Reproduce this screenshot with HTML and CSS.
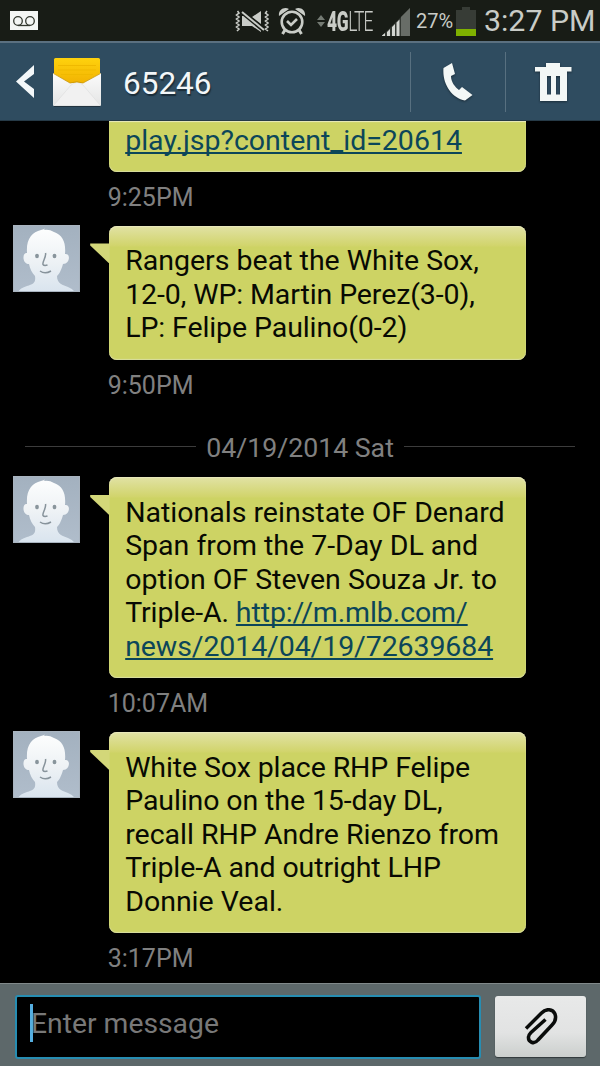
FILE: index.html
```html
<!DOCTYPE html>
<html lang="en">
<head>
<meta charset="utf-8">
<title>65246</title>
<link rel="stylesheet" href="styles.css">
</head>
<body>
<svg width="0" height="0" class="defs" aria-hidden="true">
  <defs>
    <linearGradient id="wall" x1="0" y1="0" x2="0" y2="1"><stop offset="0" stop-color="#a3b1bf"/><stop offset="1" stop-color="#b0bdcb"/></linearGradient>
    <linearGradient id="skin" x1="0" y1="0" x2="0" y2="1"><stop offset="0" stop-color="#fdfefe"/><stop offset=".5" stop-color="#eef2f5"/><stop offset="1" stop-color="#d9e4ee"/></linearGradient>
    <symbol id="person" viewBox="0 0 67 67">
      <rect width="67" height="67" fill="url(#wall)"/>
      <path d="M14 28C13 14 19 7 28 5Q31 4 32 3.500L31 5Q36 4 41 7C50 10 53 18 52 29C58 28 57 39 50 39C48 46 46 49 44 51C44 59 50 60 55 62Q60 64 62 67H5Q7 63 14 61C20 59 23 58 22 51C19 48 17 44 16 39C9 39 9 27 14 28Z" fill="url(#skin)"/>
      <ellipse cx="24" cy="31" rx="1.900" ry="2.300" fill="#89959c"/>
      <ellipse cx="41.500" cy="31" rx="1.900" ry="2.300" fill="#89959c"/>
      <path d="M32.500 28C33.500 32 29 37 30 39.500Q31 41 34.500 40M27 46Q32 49.500 38 46" fill="none" stroke="#87939b" stroke-width="1.500"/>
      <rect x=".5" y=".5" width="66" height="66" fill="none" stroke="#a9b4bf"/>
    </symbol>
  </defs>
</svg>

<div class="status">
  <svg class="voicemail" width="28" height="19" viewBox="0 0 28 19"><rect width="28" height="19" fill="#f4f6f4"/><g fill="none" stroke="#33382f" stroke-width="1.300"><circle cx="8" cy="10" r="4.300"/><circle cx="20" cy="10" r="4.300"/><path d="M8 14.500H20"/></g></svg>
  <svg class="mute" width="35" height="24" viewBox="0 0 35 24">
    <path d="M2.500 1L4 3L1.500 5L4 7L1.500 9L4 11L1.500 13L4 15L1.500 17L4 19L2 21M32 1L30.500 3L33 5L30.500 7L33 9L30.500 11L33 13L30.500 15L33 17L30.500 19L33 21" fill="none" stroke="#c9ccc7" stroke-width="1.600"/>
    <path d="M7 6H12L26 17V22L17 16H7ZM17 7L26 1V14Z" fill="#c9ccc7"/>
    <path d="M7 2L28 19.500" stroke="#181c16" stroke-width="4.500"/>
    <path d="M7 2L29 20" stroke="#c9ccc7" stroke-width="2"/>
  </svg>
  <svg class="alarm" width="28" height="28" viewBox="0 0 28 28">
    <g fill="none" stroke="#c9ccc7"><circle cx="14" cy="15" r="10.300" stroke-width="2.600"/><path d="M9 14L13 18L19 12" stroke-width="2.600"/><path d="M7 23L4.500 27M21 23L23.500 27" stroke-width="3"/></g>
    <path d="M1 9C0 3 6-1 11 2ZM27 9C28 3 22-1 17 2Z" fill="#c9ccc7"/>
  </svg>
  <svg class="updown" width="8" height="12" viewBox="0 0 8 12"><path d="M0 5L4 0L8 5ZM0 7L4 12L8 7Z" fill="#747a73"/></svg>
  <span class="net"><b>4G</b><span>LTE</span></span>
  <svg class="signal" width="28" height="28" viewBox="0 0 28 28"><path d="M0 28L28 0V28Z" fill="#343933"/><path d="M19 9L28 0V28H19Z" fill="#686d67"/><path d="M0 28V27.500L3 25V28ZM5 28V24L8 21V28ZM10 28V19L13 16V28ZM14.500 28V14.500L17.500 11.500V28Z" fill="#d3d6d1"/></svg>
  <span class="pct">27%</span>
  <svg class="battery" width="20" height="29" viewBox="0 0 20 29"><path d="M0 3H6V0H14V3H20V29H0Z" fill="#373c36"/><path d="M0 22H20V29H0Z" fill="#7fb000"/></svg>
  <span class="clock">3:27 PM</span>
</div>

<header class="bar">
  <svg class="back" width="18" height="33" viewBox="0 0 18 33"><path d="M18 0V9L8 16.500L18 24V33L0 16.500Z" fill="#f3f7f9"/></svg>
  <svg class="mail" width="50" height="50" viewBox="0 0 50 50">
    <defs><linearGradient id="gold" x1="0" y1="0" x2="0" y2="1"><stop offset="0" stop-color="#ffd20d"/><stop offset="1" stop-color="#efad00"/></linearGradient><linearGradient id="paper" x1="0" y1="0" x2="0" y2="1"><stop offset="0" stop-color="#fbfbfb"/><stop offset="1" stop-color="#e4e5e5"/></linearGradient></defs>
    <rect x="2" y="1" width="46" height="30" rx="1.500" fill="url(#gold)"/>
    <path d="M6 8.500H44M6 13H44M9 17.500H41" stroke="#f0b900" stroke-width="1"/>
    <path d="M1 16L18 26H31L49 16V48Q49 49 48 49H2Q1 49 1 48Z" fill="url(#paper)"/>
    <path d="M2 48L19 28Q25 23 31 28L48 48" fill="#f1f1f1" stroke="#dfe0e0" stroke-width=".7"/>
    <path d="M1.500 16.500L18 26Q25 23.500 31 26L48.500 16.500" fill="none" stroke="#c99709" stroke-width=".8"/>
    <path d="M2 49.500H48" stroke="#22333f"/>
  </svg>
  <h1>65246</h1>
  <div class="action">
    <svg width="32" height="40" viewBox="0 0 32 40"><path d="M1.500 6L10 1L13 12L9 14C9 20 13 25 17 28L20 25L30.500 33L23 38.500C10 36 0 22 1.500 6Z" fill="#f3f7f6"/></svg>
  </div>
  <div class="action">
    <svg width="38" height="40" viewBox="0 0 38 40"><path fill-rule="evenodd" d="M1 5H12V1H26V5H37.500V9.500H33V39H6V9.500H1ZM13 14V32.500H17V14ZM22 14V32.500H26V14Z" fill="#f3f7f6"/></svg>
  </div>
</header>

<main class="thread">
  <article class="msg first">
    <div class="bubble"><p><a>play.jsp?content_id=20614</a></p></div>
    <time>9:25PM</time>
  </article>
  <article class="msg">
    <svg class="avatar"><use href="#person"/></svg>
    <div class="bubble tail"><p>Rangers beat the White Sox,<br><span class="tight">12-0, WP: Martin Perez(3-0),<br>LP: Felipe Paulino(0-2)</span></p></div>
    <time>9:50PM</time>
  </article>
  <div class="date"><span>04/19/2014 Sat</span></div>
  <article class="msg">
    <svg class="avatar"><use href="#person"/></svg>
    <div class="bubble tail"><p>Nationals reinstate OF Denard<br>Span from the 7-Day DL and<br>option OF Steven Souza Jr. to<br><span class="tight">Triple-A. <a>http://m.mlb.com/<br>news/2014/04/19/72639684</a></span></p></div>
    <time>10:07AM</time>
  </article>
  <article class="msg">
    <svg class="avatar"><use href="#person"/></svg>
    <div class="bubble tail"><p><span class="tight">White Sox place RHP Felipe<br>Paulino on the 15-day DL,</span><br>recall RHP Andre Rienzo from<br><span class="tight">Triple-A and outright LHP</span><br>Donnie Veal.</p></div>
    <time>3:17PM</time>
  </article>
</main>

<footer class="composer">
  <div class="field"><i class="caret"></i><span>Enter message</span></div>
  <div class="attach">
    <svg width="34" height="38" viewBox="0 0 34 38"><path d="M2 20.500L17.500 5C22 0 29 1 31 6Q33 12 28 17L14 32C10 37 4 34 4.500 29Q4.500 27 7 24.500L21.500 11.500" fill="none" stroke="#0a0c0b" stroke-width="3.500"/></svg>
  </div>
</footer>
</body>
</html>
```

FILE: styles.css
```css
* { box-sizing: border-box; }
body {
  margin: 0;
  width: 600px;
  height: 1066px;
  overflow: hidden;
  display: flex;
  flex-direction: column;
  background: #000;
  color: #080a03;
  font-family: Roboto, "Liberation Sans", sans-serif;
}
svg { display: block; flex: none; }
.defs { position: absolute; }

.status {
  height: 41px;
  flex: none;
  display: flex;
  align-items: flex-start;
  background: #181c16;
  color: #c9ccc7;
  white-space: nowrap;
}
.voicemail { margin: 11px 0 0 10px; }
.mute { margin: 10px 0 0 197px; }
.alarm { margin: 7px 0 0 8px; }
.updown { margin: 15px 0 0 11px; }
.net {
  display: flex;
  margin-left: 2px;
  width: 46px;
  font-size: 28px;
  line-height: 43px;
  transform: scaleX(.62);
  transform-origin: 0 0;
}
.net b { font-weight: 900; letter-spacing: -.5px; }
.net span { font-weight: 300; letter-spacing: -1.600px; }
.signal { margin: 8px 0 0 9px; }
.pct { margin-left: 6px; width: 36px; font-size: 20px; line-height: 43px; }
.battery { margin: 7px 0 0 4px; }
.clock { margin-left: 8px; font-size: 30.300px; line-height: 42px; }

.bar {
  height: 80px;
  flex: none;
  display: flex;
  align-items: center;
  padding-left: 16px;
  background: #2f4c60;
  border-top: 2px solid #5b7080;
  border-bottom: 1px solid #263a47;
}
.mail { margin-left: 18px; }
.bar h1 {
  flex: 1;
  margin: 5px 0 0 21px;
  color: #f3f7f9;
  font-size: 31.500px;
  font-weight: 400;
  line-height: 40px;
  text-shadow: 1px 2px 1px #1b2d39;
}
.action {
  width: 95px;
  height: 60px;
  display: flex;
  align-items: center;
  justify-content: center;
  border-left: 1px solid #587080;
}
.action svg { filter: drop-shadow(0 1px 1px #1b2d39); }

.thread { height: 862px; flex: none; overflow: hidden; }
.msg {
  display: grid;
  grid-template-columns: 66.700px 417px;
  column-gap: 29px;
  grid-template-rows: auto 54px;
  padding-left: 13px;
}
.bubble, .msg time { grid-column: 2; }
.avatar { width: 67px; height: 67px; margin-top: -1px; grid-row: 1; }
.bubble {
  position: relative;
  padding: 18.500px 0 15.500px 16.500px;
  border-radius: 8px;
  background: linear-gradient(#e1e2a5, #d1d46b 20px, #cdd364 21px);
  box-shadow: inset 0 1px 1px #e9e9bd, inset 0 -1px 1px #d9dda0;
}
.first .bubble {
  padding: 2.500px 0 15px 16.500px;
  border-radius: 0 0 8px 8px;
  background: #cdd364;
}
.tail::before {
  content: "";
  position: absolute;
  left: -18.500px;
  top: 17.500px;
  width: 19px;
  height: 20px;
  background: #d3d779;
  clip-path: polygon(0 0, 100% 0, 100% 100%, 0 2px);
}
.bubble p {
  margin: 0;
  font-size: 28.500px;
  line-height: 33.400px;
  white-space: nowrap;
}
.bubble .tight { letter-spacing: -.1px; }
.bubble a {
  color: #0c4659;
  text-decoration: underline;
  text-decoration-thickness: 2px;
  text-underline-offset: 2px;
  text-decoration-skip-ink: none;
}
.msg time {
  margin-left: -1px;
  color: #808080;
  font-size: 25px;
  line-height: 52px;
}
.date {
  height: 63.300px;
  display: flex;
  align-items: center;
  gap: 10px;
  padding: 2px 25px 0;
  color: #808080;
  font-size: 26.700px;
}
.date span { padding-top: 2px; }
.date::before, .date::after { content: ""; flex: 1; height: 1px; background: #3c3c3c; }

.composer {
  flex: 1;
  display: flex;
  padding: 11px 14px 0 15px;
  gap: 14px;
  background: #5d686a;
  border-top: 1px solid #81898a;
}
.field {
  width: 466px;
  height: 64px;
  display: flex;
  padding: 7px 0 0 13px;
  border: 2px solid #278db2;
  border-radius: 3px;
  background: #000;
  color: #787878;
  font-size: 28.300px;
  line-height: 40px;
}
.caret { width: 3px; height: 38px; margin-right: -2px; background: #55aee0; }
.attach {
  width: 91px;
  height: 61px;
  margin-top: 1px;
  display: flex;
  align-items: center;
  justify-content: center;
  border-radius: 3px;
  background: linear-gradient(#e8e9e9, #e2e3e3 60%, #cbcfcd);
  box-shadow: 0 1px 1px #30383a;
}
```
